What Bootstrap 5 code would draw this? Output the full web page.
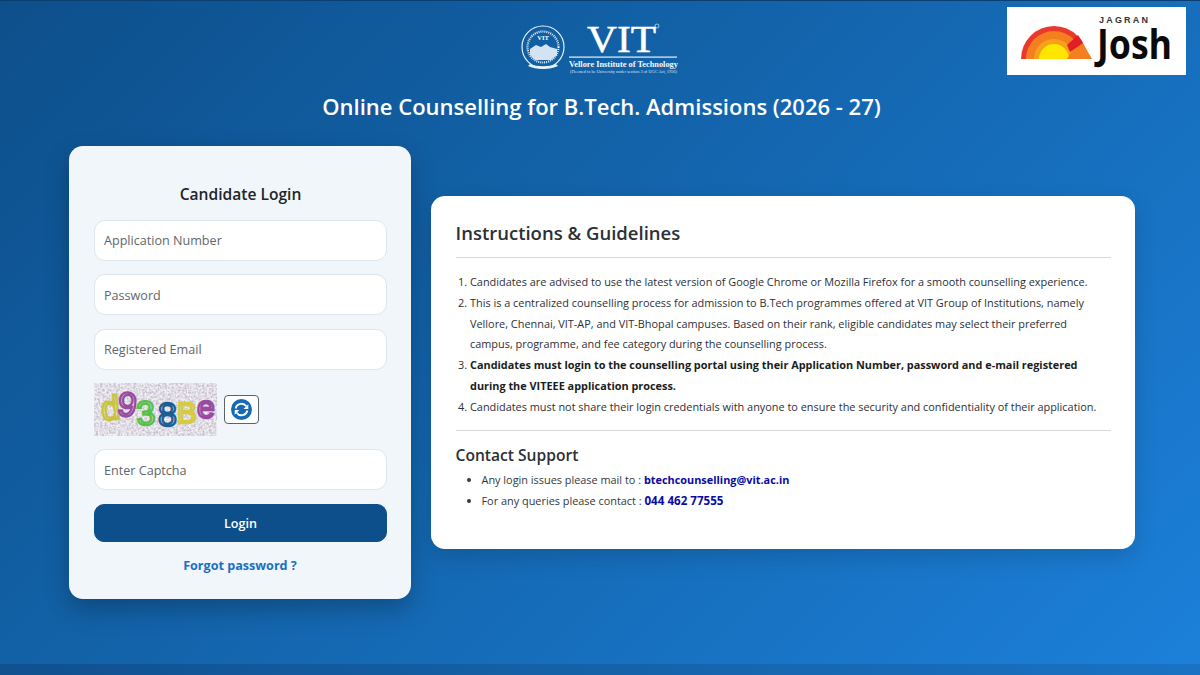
<!DOCTYPE html>
<html lang="en">
<head>
    <meta charset="utf-8">
    <title>VIT Online Counselling</title>
    <link href="https://cdn.jsdelivr.net/npm/bootstrap@5.3.2/dist/css/bootstrap.min.css" rel="stylesheet">
    <style>
        html, body { height: 100%; }
        body {
            font-family: "Open Sans", "Noto Sans", sans-serif;
            background: linear-gradient(135deg, #0d4f8b 0%, #1467b0 50%, #1c80da 100%);
            overflow: hidden;
            border-top: 1px solid #0b3f70;
        }
        .page-shell { height: 663px; padding-top: 21px; position: relative; }
        .vit-logo { display: block; margin: 0 auto; width: 160px; height: 55px; overflow: visible; }
        .page-title {
            font-size: 22px; font-weight: 600; color: #fff; text-align: center;
            margin: 14px 0 0 3px; line-height: 30px;
        }
        .main-area { width: 1066px; margin: 25px 0 0 69px; gap: 20px; height: 453px; }
        .login-panel {
            width: 342px; height: 453px; flex: none; background: #f1f6fb; border-radius: 14px;
            padding: 36px 24px 0 25px; box-shadow: 0 10px 25px rgba(0, 0, 0, .25);
        }
        .login-title { font-size: 15.6px; font-weight: 600; color: #212529; text-align: center; margin: 0 0 13.5px; line-height: 24px; }
        .login-panel .form-control {
            height: 41px; border-radius: 11px; border-color: #dfe5ec; font-size: 12.6px;
            padding: 1px 9px 0; margin-bottom: 13.5px; background: #fff;
        }
        .login-panel .form-control::placeholder { color: #5f666d; opacity: 1; }
        .captcha-line { gap: 7px; margin-bottom: 13px; }
        .captcha-img { width: 123px; height: 53px; display: block; }
        .refresh-btn {
            width: 35px; height: 29px; padding: 0; border: 1px solid #59636e; border-radius: 4px; background: #fff;
            display: flex; align-items: center; justify-content: center;
        }
        .login-btn {
            height: 38px; width: 100%; background: #0d4f8b; border-color: #0d4f8b; color: #fff;
            font-size: 12.6px; font-weight: 600; border-radius: 10px; padding: 8px 0 4px;
        }
        .forgot-link { display: block; text-align: center; color: #1a6fc4; font-size: 12.6px; font-weight: 700; text-decoration: none; margin: 15.5px 1px 0 0; }
        .info-panel {
            width: 704px; height: 353px; flex: none; background: #fff; border-radius: 14px;
            padding: 22px 24px 0 24.5px; box-shadow: 0 8px 22px rgba(0, 0, 0, .15);
        }
        .info-title { font-size: 18.5px; font-weight: 600; color: #2b3036; margin: 0; line-height: 29px; padding-bottom: 10px; border-bottom: 1px solid #d6d9dc; }
        .info-list { margin: 14px 0 0; padding-left: 14.5px; font-size: 10.9px; line-height: 20.8px; color: #2b3036; }
        .info-list b { color: #1a1d20; font-weight: 700; font-size: 10.88px; }
        .info-rule { margin: 12px 0 13px; border-top: 1px solid #d6d9dc; }
        .support-title { font-size: 15.6px; font-weight: 600; color: #2b3036; margin: 0; line-height: 23px; }
        .support-list { margin: 2px 0 0; padding-left: 26px; font-size: 10.9px; line-height: 21px; color: #33383d; }
        .support-list b { color: #0a0aa5; font-weight: 700; }
        .support-list b.phone-no { font-size: 11.6px; }
        .josh-logo { position: absolute; top: 6px; right: 14px; width: 179px; height: 68px; background: #fff; display: block; }
        .foot-strip { height: 11px; background: linear-gradient(90deg, #10508f, #1665ae 60%, #1a72c4); }
    </style>
</head>
<body>
    <div class="page-shell">
        <svg class="vit-logo" viewBox="0 0 160 55">
            <g fill="none" stroke="#e6f1fa">
                <circle cx="23" cy="25" r="21" stroke-width="1.2"/>
                <circle cx="23" cy="25" r="15.5" stroke-width="2.2" stroke-dasharray="1 1"/>
            </g>
            <text x="23" y="18" text-anchor="middle" font-family="Liberation Serif" font-weight="700" font-size="6.5" fill="#fff">VIT</text>
            <path d="M10 27l6-4 5 2 5-3 4 3 7 2v6l-6 5H15l-5-5z" fill="#d3e3f1"/>
            <path d="M8 44c8 4 22 4 30 0l-2-2c-7 3-19 3-26 0z" fill="#e6f1fa"/>
            <text x="67" y="29.500" font-family="Liberation Serif" font-size="37" fill="#fff" font-weight="400" stroke="#fff" stroke-width=".5" textLength="69" lengthAdjust="spacingAndGlyphs">VIT</text>
            <circle cx="137" cy="4" r="2" fill="none" stroke="#fff" stroke-width=".6"/>
            <rect x="49" y="34.500" width="108" height="1.200" fill="#e6f1fa"/>
            <text x="49" y="45" font-family="Liberation Serif" font-weight="700" font-size="8.400" fill="#f2f8fd" textLength="109" lengthAdjust="spacingAndGlyphs">Vellore Institute of Technology</text>
            <text x="50" y="51" font-family="Liberation Serif" font-size="4" fill="#d7e7f5" textLength="107" lengthAdjust="spacingAndGlyphs">(Deemed to be University under section 3 of UGC Act, 1956)</text>
        </svg>
        <h1 class="page-title">Online Counselling for B.Tech. Admissions (2026 - 27)</h1>

        <svg class="josh-logo" viewBox="0 0 179 68">
            <circle cx="47" cy="52" r="33" fill="#e8392a"/>
            <circle cx="47" cy="52" r="28" fill="#f47f20"/>
            <circle cx="47" cy="52" r="20" fill="#f5a21b"/>
            <circle cx="47" cy="52" r="15" fill="#ffe600"/>
            <path d="M60 52L73 31 85 52z" fill="#f47f20"/>
            <path d="M60 38L71 28l5 8-13 9z" fill="#e21e26"/>
            <rect y="52" width="90" height="16" fill="#fff"/>
            <text x="92" y="16" font-family="Liberation Sans" font-size="9" font-weight="700" fill="#333" letter-spacing="2.200">JAGRAN</text>
            <text x="90" y="52" font-family="Noto Sans" font-size="42" font-weight="700" fill="#0a0a0a" textLength="75" lengthAdjust="spacingAndGlyphs">Josh</text>
        </svg>

        <div class="main-area d-flex align-items-center">
            <div class="login-panel">
                <h5 class="login-title">Candidate Login</h5>
                <form>
                    <input type="text" class="form-control" placeholder="Application Number">
                    <input type="password" class="form-control" placeholder="Password">
                    <input type="email" class="form-control" placeholder="Registered Email">
                    <div class="captcha-line d-flex align-items-center">
                        <svg class="captcha-img" viewBox="0 0 123 53">
                            <filter id="grain" x="0" y="0" width="100%" height="100%">
                                <feTurbulence type="fractalNoise" baseFrequency=".45" numOctaves="2" seed="4"/>
                                <feColorMatrix values="0 0 0 0 .55  0 0 0 0 .50  0 0 0 0 .60  2.400 0 0 0 -.85"/>
                            </filter>
                            <rect width="123" height="53" fill="#f0eff2"/>
                            <rect width="123" height="53" filter="url(#grain)"/>
                            <g font-family="Liberation Sans" font-size="34" fill="none" stroke-width="2.300">
                                <text x="7" y="37" stroke="#c9c43c" transform="rotate(-6 15 25)">d</text>
                                <text x="24" y="33" stroke="#9a4aa0" transform="rotate(8 32 20)">9</text>
                                <text x="42" y="42" stroke="#58c04a" transform="rotate(-4 50 28)">3</text>
                                <text x="64" y="43" stroke="#1d5d96">8</text>
                                <text x="83" y="40" stroke="#d4cb3e" font-size="30">B</text>
                                <text x="103" y="35" stroke="#9a4aa0" font-size="32">e</text>
                            </g>
                        </svg>
                        <button type="button" class="refresh-btn" aria-label="Refresh captcha">
                            <svg width="21" height="21" viewBox="0 0 20 20">
                                <circle cx="10" cy="10" r="10" fill="#1669b5"/>
                                <path d="M4.500 9a5.500 5.500 0 0 1 10-2" fill="none" stroke="#fff" stroke-width="1.800"/>
                                <path d="M16.500 5v4.500h-4.500z" fill="#fff"/>
                                <path d="M15.500 11a5.500 5.500 0 0 1-10 2" fill="none" stroke="#fff" stroke-width="1.800"/>
                                <path d="M3.500 15v-4.500h4.500z" fill="#fff"/>
                            </svg>
                        </button>
                    </div>
                    <input type="text" class="form-control" placeholder="Enter Captcha">
                    <button type="button" class="btn login-btn">Login</button>
                    <a href="#" class="forgot-link">Forgot password ?</a>
                </form>
            </div>

            <div class="info-panel">
                <h4 class="info-title">Instructions &amp; Guidelines</h4>
                <ol class="info-list">
                    <li>Candidates are advised to use the latest version of Google Chrome or Mozilla Firefox for a smooth counselling experience.</li>
                    <li>This is a centralized counselling process for admission to B.Tech programmes offered at VIT Group of Institutions, namely Vellore, Chennai, VIT-AP, and VIT-Bhopal campuses. Based on their rank, eligible candidates may select their preferred campus, programme, and fee category during the counselling process.</li>
                    <li><b>Candidates must login to the counselling portal using their Application Number, password and e-mail registered during the VITEEE application process.</b></li>
                    <li>Candidates must not share their login credentials with anyone to ensure the security and confidentiality of their application.</li>
                </ol>
                <div class="info-rule"></div>
                <h5 class="support-title">Contact Support</h5>
                <ul class="support-list">
                    <li>Any login issues please mail to : <b>btechcounselling@vit.ac.in</b></li>
                    <li>For any queries please contact : <b class="phone-no">044 462 77555</b></li>
                </ul>
            </div>
        </div>
    </div>
    <div class="foot-strip"></div>
    <script src="https://cdn.jsdelivr.net/npm/bootstrap@5.3.2/dist/js/bootstrap.bundle.min.js"></script>
</body>
</html>
